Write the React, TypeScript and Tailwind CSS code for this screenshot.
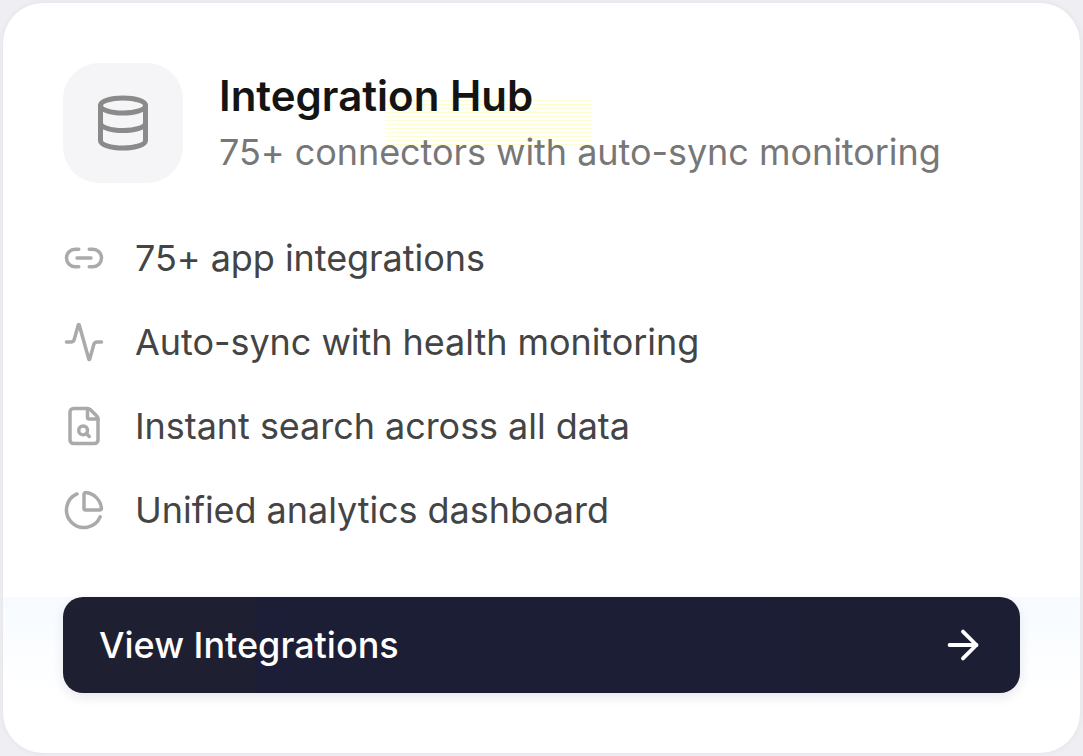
import { Activity, ArrowRight, ChartPie, Database, FileSearch, Link2 } from "lucide-react";

const features = [
  { icon: Link2, label: "75+ app integrations" },
  { icon: Activity, label: "Auto-sync with health monitoring" },
  { icon: FileSearch, label: "Instant search across all data" },
  { icon: ChartPie, label: "Unified analytics dashboard" },
];

export default function App() {
  return (
    <div className="h-[756px] w-[1083px] overflow-hidden bg-[#eeeef3] p-[3px] font-['Inter',sans-serif]">
      <div className="relative flex h-[750px] w-[1077px] flex-col overflow-hidden rounded-[40px] bg-white px-[60px] pt-[60px] shadow-[0_0_6px_rgba(0,0,0,0.06)]">
        {/* faint banding that sits behind the content */}
        <div className="absolute top-[94px] left-[382px] h-[48px] w-[207px] bg-[repeating-linear-gradient(0deg,#fdfdc0_0,#fdfdc0_1px,transparent_1px,transparent_4px)] opacity-70" />
        <div className="absolute top-[594px] left-0 h-[96px] w-full bg-linear-to-b from-[#f7fbff] to-white" />

        <div className="relative flex items-center gap-[36px]">
          <div className="flex size-[120px] shrink-0 items-center justify-center rounded-[36px] bg-[#f5f5f7]">
            <Database className="size-[60px] text-[#8a8a8a]" strokeWidth={2} />
          </div>
          <div className="flex flex-col pt-[2px]">
            <span className="text-[42px] leading-[56px] font-semibold text-[#141414]">Integration Hub</span>
            <span className="text-[36px] leading-[56px] tracking-[-0.05px] text-[#777777]">
              75+ connectors with auto-sync monitoring
            </span>
          </div>
        </div>
        <div className="relative mt-[47px] flex flex-col gap-[28px]">
          {features.map(({ icon: Icon, label }) => (
            <div key={label} className="flex h-[56px] items-center gap-[30px]">
              <Icon className="size-[42px] shrink-0 text-[#aaaaaa]" strokeWidth={2} />
              <span className="text-[36px] leading-[56px] tracking-[-0.05px] text-[#444444]">{label}</span>
            </div>
          ))}
        </div>
        <button
          type="button"
          className="relative mt-[59px] flex h-[96px] w-[957px] items-center justify-between rounded-[20px] bg-[linear-gradient(90deg,#1e1f30_0,#1e1f30_192px,#1b1e36_192px,#1c1e33_100%)] pr-[34px] pl-[36px] text-[36px] font-medium text-white shadow-[0_4px_12px_rgba(30,30,80,0.1)]"
        >
          View Integrations
          <ArrowRight className="size-[46px]" strokeWidth={2} />
        </button>
      </div>
    </div>
  );
}
